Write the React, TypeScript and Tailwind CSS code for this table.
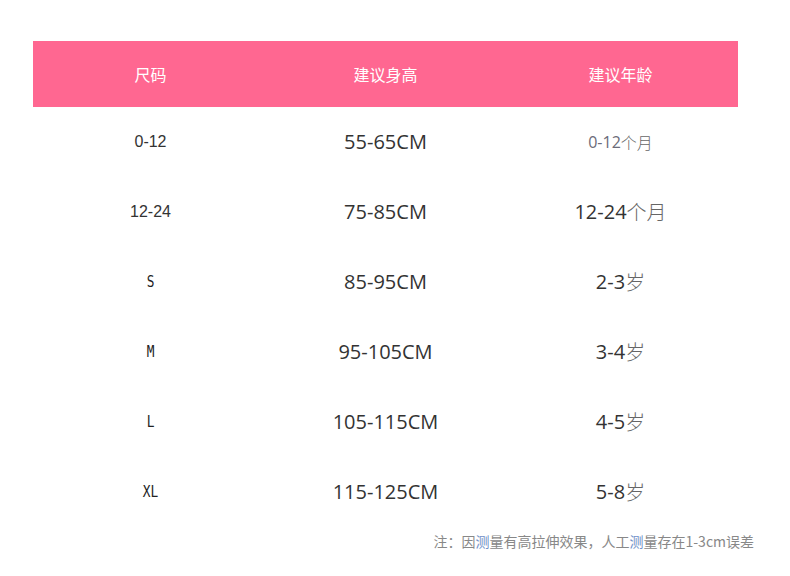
import React from 'react';

const rows = [
  { size: '0-12', sizeMono: false, height: '55-65CM', num: '0-12', unit: '个月', small: true },
  { size: '12-24', sizeMono: false, height: '75-85CM', num: '12-24', unit: '个月', small: false },
  { size: 'S', sizeMono: true, height: '85-95CM', num: '2-3', unit: '岁', small: false },
  { size: 'M', sizeMono: true, height: '95-105CM', num: '3-4', unit: '岁', small: false },
  { size: 'L', sizeMono: true, height: '105-115CM', num: '4-5', unit: '岁', small: false },
  { size: 'XL', sizeMono: true, height: '115-125CM', num: '5-8', unit: '岁', small: false },
];

const cjk = "font-['Noto_Sans_CJK_SC',sans-serif]";

const App = () => {
  return (
    <div className="w-[790px] h-[576px] bg-white pt-[41px]">
      <div className="ml-[33px] w-[705px]">
        <div className={`grid grid-cols-3 h-[66px] bg-[#ff6791] text-white text-[16px] ${cjk}`}>
          <div className="flex items-center justify-center">尺码</div>
          <div className="flex items-center justify-center">建议身高</div>
          <div className="flex items-center justify-center">建议年龄</div>
        </div>
        {rows.map(r => (
          <div key={r.size} className="grid grid-cols-3 h-[70px] text-[#333]">
            <div
              className={`flex items-center justify-center ${
                r.sizeMono
                  ? "font-['DejaVu_Sans_Mono',monospace] text-[16px] scale-x-[0.8] text-[#222]"
                  : "font-['Liberation_Sans',sans-serif] text-[16px]"
              }`}
            >
              {r.size}
            </div>
            <div className="flex items-center justify-center text-[20px] font-['Open_Sans',sans-serif]">
              {r.height}
            </div>
            <div
              className={`flex items-center justify-center ${
                r.small ? 'text-[16px] text-[#6b6b78]' : 'text-[20px]'
              }`}
            >
              <span className="font-['Open_Sans',sans-serif]">{r.num}</span>
              <span className={`${cjk} font-light text-[#666]`}>{r.unit}</span>
            </div>
          </div>
        ))}
      </div>
      <div className={`mt-[4px] pr-[36px] text-right text-[14px] leading-[20px] text-[#888] ${cjk}`}>
        注：因<span className="text-[#6f8fc8]">测</span>量有高拉伸效果，人工<span className="text-[#6f8fc8]">测</span>量存在1-3cm误差
      </div>
    </div>
  );
};

export default App;
